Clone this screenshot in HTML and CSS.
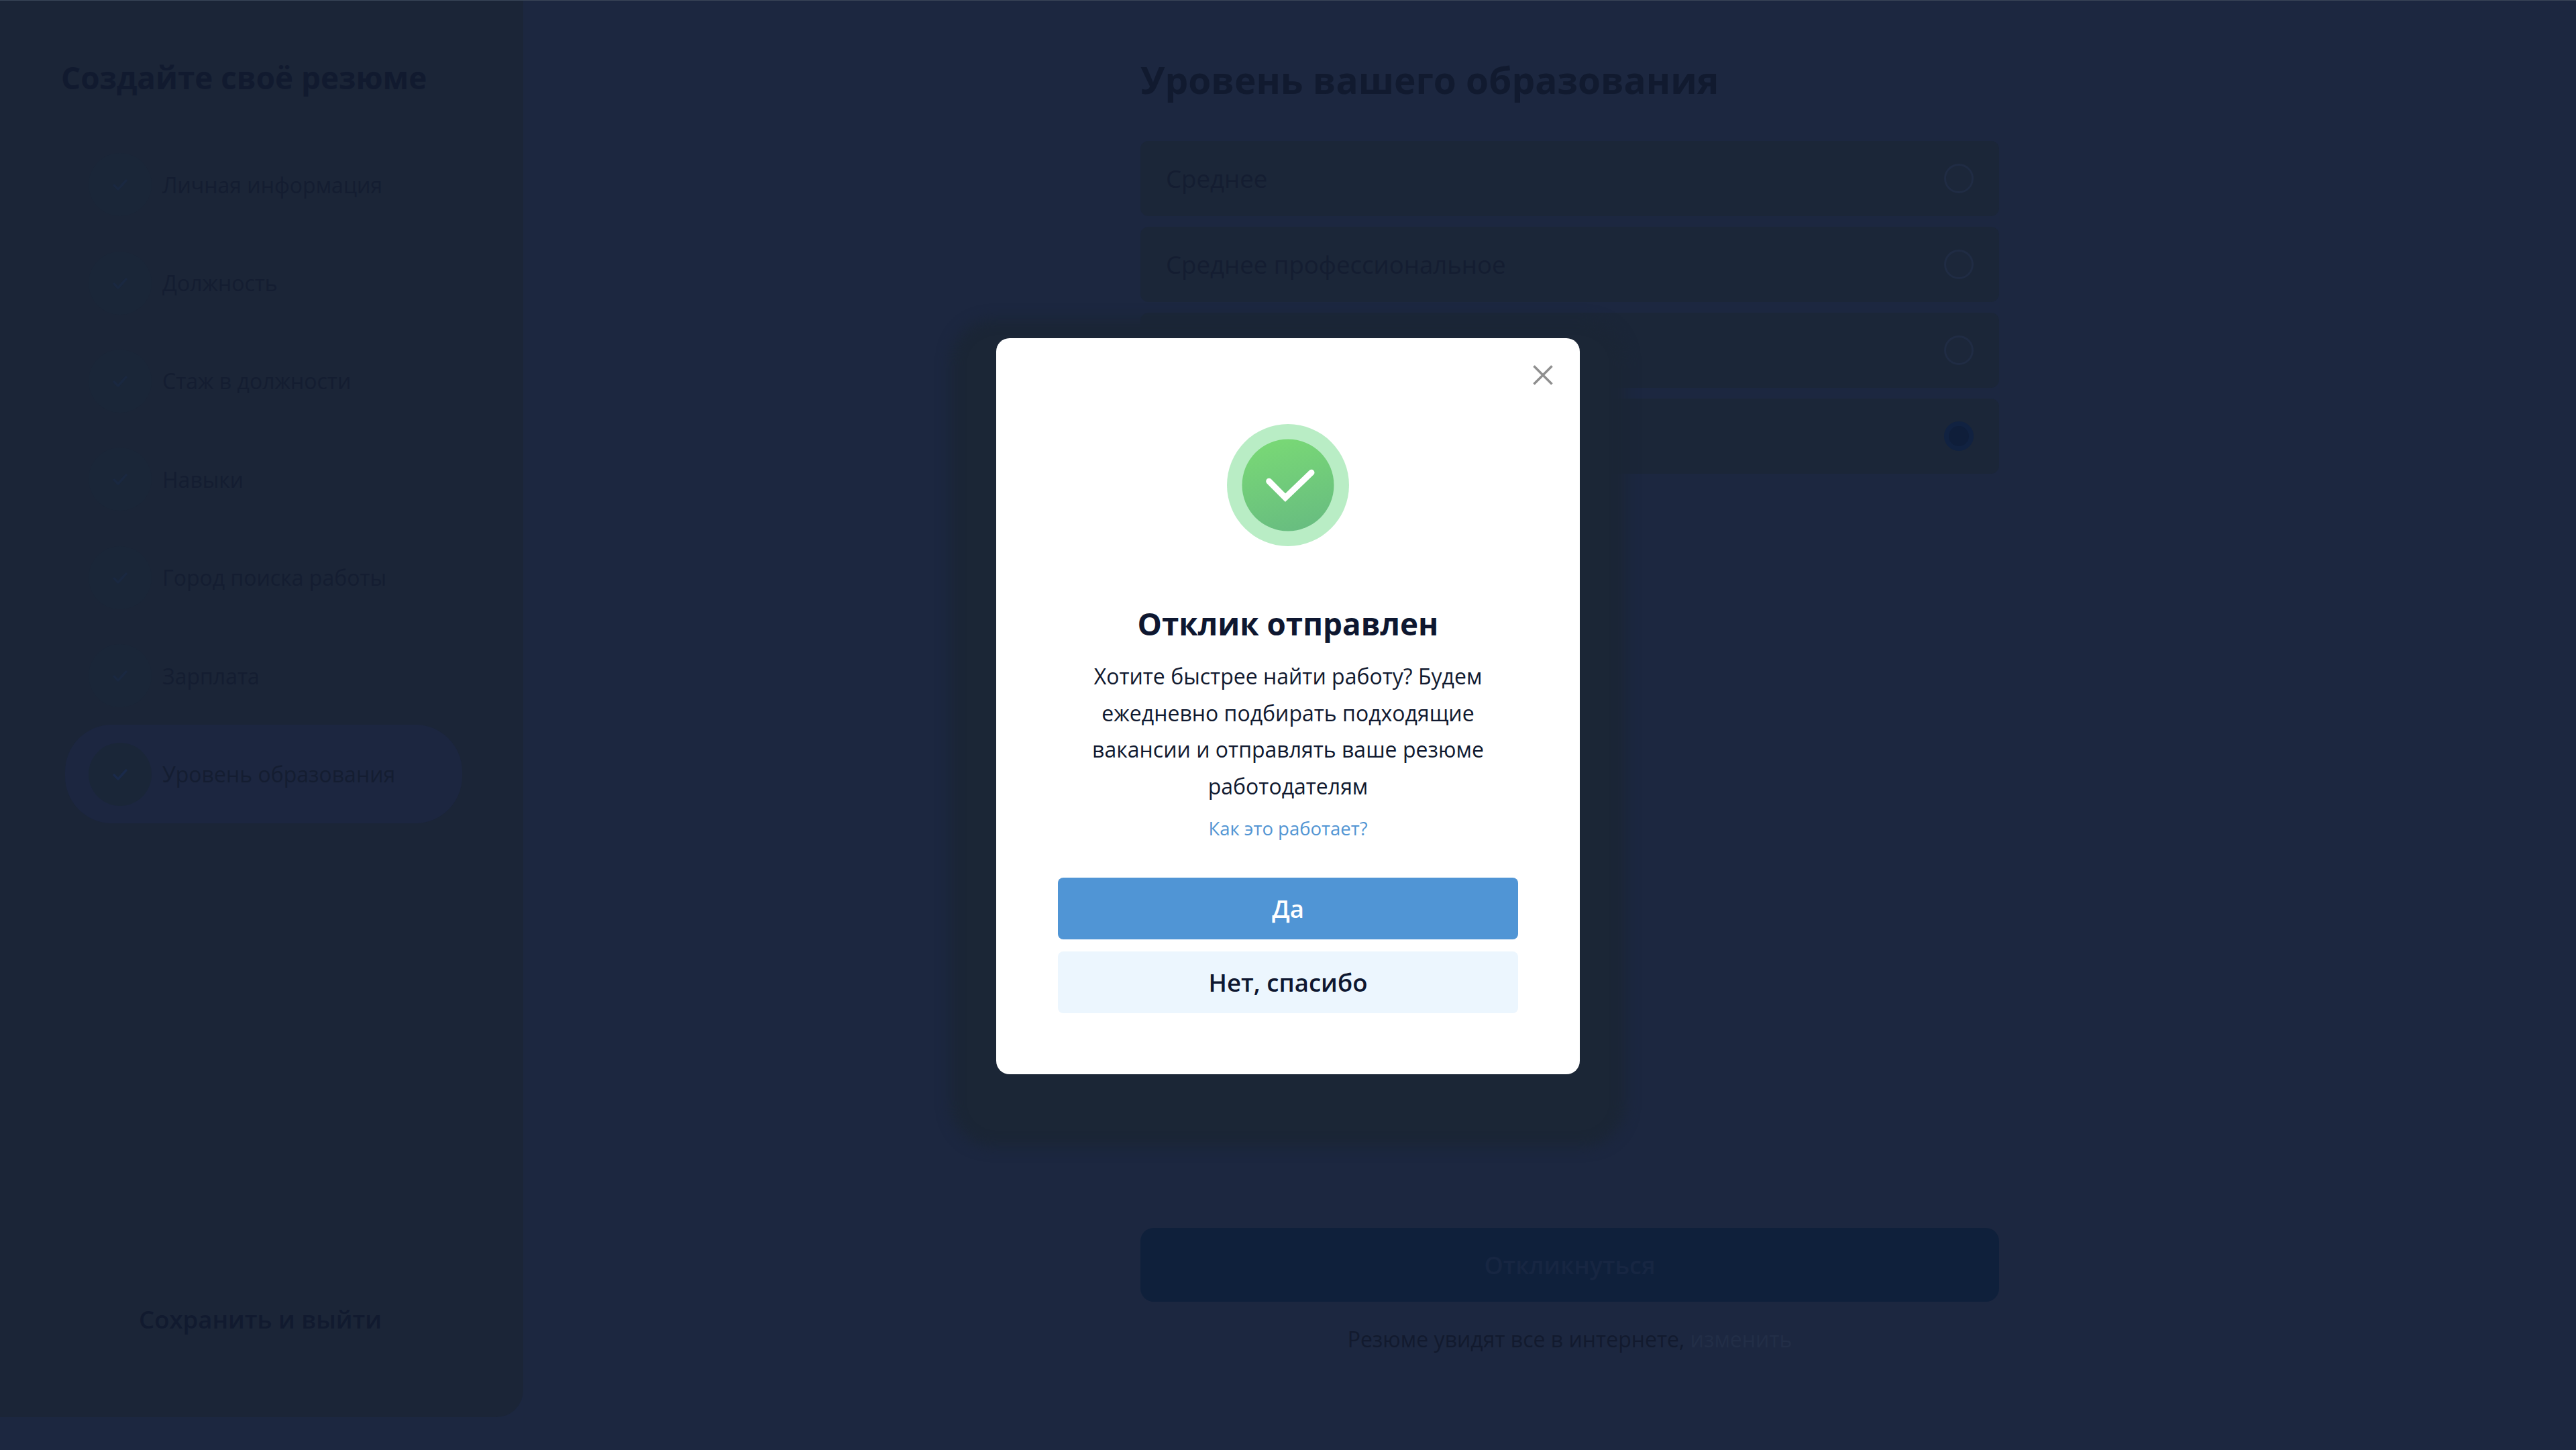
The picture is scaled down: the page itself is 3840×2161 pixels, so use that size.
FILE: index.html
```html
<!DOCTYPE html>
<html lang="ru">
<head>
<meta charset="utf-8">
<title>Уровень вашего образования</title>
<link rel="stylesheet" href="styles.css">
</head>
<body>
<div class="page">
  <aside class="sidebar">
    <h2 class="sidebar-title">Создайте своё резюме</h2>
    <ul class="steps">
      <li class="step"><span class="step-icon"><svg viewBox="0 0 40 40"><path d="M11 21l6 6 12-13"/></svg></span>Личная информация</li>
      <li class="step"><span class="step-icon"><svg viewBox="0 0 40 40"><path d="M11 21l6 6 12-13"/></svg></span>Должность</li>
      <li class="step"><span class="step-icon"><svg viewBox="0 0 40 40"><path d="M11 21l6 6 12-13"/></svg></span>Стаж в должности</li>
      <li class="step"><span class="step-icon"><svg viewBox="0 0 40 40"><path d="M11 21l6 6 12-13"/></svg></span>Навыки</li>
      <li class="step"><span class="step-icon"><svg viewBox="0 0 40 40"><path d="M11 21l6 6 12-13"/></svg></span>Город поиска работы</li>
      <li class="step"><span class="step-icon"><svg viewBox="0 0 40 40"><path d="M11 21l6 6 12-13"/></svg></span>Зарплата</li>
      <li class="step step-active"><span class="step-icon"><svg viewBox="0 0 40 40"><path d="M11 21l6 6 12-13"/></svg></span>Уровень образования</li>
    </ul>
    <div class="save">Сохранить и выйти</div>
  </aside>
  <main class="content">
    <h1 class="content-title">Уровень вашего образования</h1>
    <div class="options">
      <div class="option"><span>Среднее</span><i class="radio"></i></div>
      <div class="option"><span>Среднее профессиональное</span><i class="radio"></i></div>
      <div class="option"><span></span><i class="radio"></i></div>
      <div class="option"><span></span><i class="radio radio-on"></i></div>
    </div>
    <div class="submit">Откликнуться</div>
    <p class="note">Резюме увидят все в интернете, <span class="note-link">изменить</span></p>
  </main>
</div>
<section class="modal">
  <svg class="modal-close" viewBox="0 0 30 30"><path d="M1.5 1.5l27 27M28.5 1.5l-27 27"/></svg>
  <svg class="modal-icon" viewBox="0 0 182 182">
    <defs>
      <linearGradient id="disc" x1="0.35" y1="0.05" x2="0.6" y2="1">
        <stop offset="0" stop-color="#78d776"/>
        <stop offset="1" stop-color="#68bd80"/>
      </linearGradient>
    </defs>
    <circle cx="91" cy="91" r="91" fill="#b9edc5"/>
    <circle cx="91" cy="91" r="68.5" fill="url(#disc)"/>
    <path class="tick" d="M62.7 85.3L87 109.7 126 72.3"/>
  </svg>
  <h3 class="modal-title">Отклик отправлен</h3>
  <p class="modal-text">Хотите быстрее найти работу? Будем ежедневно подбирать подходящие вакансии и отправлять ваше резюме работодателям</p>
  <a class="modal-link">Как это работает?</a>
  <div class="modal-actions">
    <button class="btn btn-primary">Да</button>
    <button class="btn btn-secondary">Нет, спасибо</button>
  </div>
</section>
</body>
</html>
```
FILE: styles.css
```css
* { box-sizing: border-box; }
html, body { margin: 0; height: 100%; }
body {
  background: #1c2740;
  font-family: "Open Sans", "Noto Sans", sans-serif;
  color: #121b30;
  overflow: hidden;
  border-top: 1px solid #3a4658;
}
.page { display: flex; align-items: flex-start; width: 3840px; height: 2160px; }
.sidebar {
  width: 780px;
  height: 2111px;
  flex: none;
  background: #1b2537;
  border-radius: 0 0 40px 0;
  padding: 82px 0 0 91px;
  display: flex;
  flex-direction: column;
}
.sidebar-title { margin: 0 0 54px; font-size: 45.8px; line-height: 65px; font-weight: 700; color: #111a2f; }
.steps { list-style: none; margin: 0; padding: 0; }
.step {
  display: flex;
  align-items: center;
  gap: 16px;
  width: 592px;
  height: 146.4px;
  margin-left: 6px;
  padding-left: 35px;
  font-size: 32px;
  color: #141d31;
}
.step-active { background: #1c2640; border-radius: 70px; }
.step-icon {
  width: 94px;
  height: 94px;
  flex: none;
  border-radius: 50%;
  background: #1a2638;
  display: flex;
  align-items: center;
  justify-content: center;
}
.step-icon svg { width: 40px; height: 40px; }
.step-icon path { fill: none; stroke: #1a2840; stroke-width: 3.5; stroke-linecap: round; stroke-linejoin: round; }
.step-active .step-icon path { stroke: #1a2a4a; }
.save { margin: auto 0 120px 116px; font-size: 36.5px; line-height: 52px; font-weight: 600; color: #111a2f; }
.content { margin-left: 920px; width: 1280px; padding-top: 80px; display: flex; flex-direction: column; }
.content-title { margin: 0 0 53px; font-size: 55px; line-height: 76px; font-weight: 700; color: #111a2f; }
.options { display: flex; flex-direction: column; gap: 16px; }
.option {
  height: 112px;
  background: #1b2638;
  border-radius: 12px;
  display: flex;
  align-items: center;
  justify-content: space-between;
  padding: 0 38px 0 38px;
  font-size: 36.6px;
  color: #141d31;
}
.radio { width: 44px; height: 44px; border-radius: 50%; border: 3px solid #202c44; background: #1c273a; }
.radio-on { background: #0f1e3a; border: 7px solid #112241; }
.submit {
  margin-top: 1124px;
  height: 110px;
  background: #0f203b;
  border-radius: 20px;
  display: flex;
  align-items: center;
  justify-content: center;
  font-size: 36px;
  font-weight: 600;
  color: #172642;
}
.note { margin: 33px 0 0; text-align: center; font-size: 32px; line-height: 46px; color: #121a2e; }
.note-link { color: #222e47; }
.modal {
  position: absolute;
  left: 1485px;
  top: 504px;
  width: 870px;
  height: 1097px;
  background: #fff;
  border-radius: 20px;
  box-shadow: 0 40px 20px 68px #1b2636;
  padding: 128px 92px 0;
  display: flex;
  flex-direction: column;
  align-items: center;
  text-align: center;
}
.modal-close { position: absolute; left: 800px; top: 40px; width: 30px; height: 30px; }
.modal-close path { fill: none; stroke: #8f8f8f; stroke-width: 3.5; }
.modal-icon { width: 182px; height: 182px; display: block; flex: none; }
.tick { fill: none; stroke: #fff; stroke-width: 9; stroke-linecap: round; stroke-linejoin: miter; }
.modal-title { margin: 85px 0 0; font-size: 45.8px; line-height: 60px; font-weight: 700; color: #0e1730; }
.modal-text { margin: 22px 0 0; width: 600px; font-size: 32px; line-height: 54.6px; color: #10192f; }
.modal-link { margin-top: 17px; font-size: 27.5px; line-height: 38px; color: #5295d3; }
.modal-actions { margin-top: 54px; width: 686px; display: flex; flex-direction: column; gap: 18px; }
.btn {
  height: 92px;
  border: 0;
  border-radius: 8px;
  font-family: inherit;
  font-size: 36.6px;
  font-weight: 600;
}
.btn-primary { background: #5095d5; color: #fff; }
.btn-secondary { background: #ecf6fe; color: #0e1730; }
```
